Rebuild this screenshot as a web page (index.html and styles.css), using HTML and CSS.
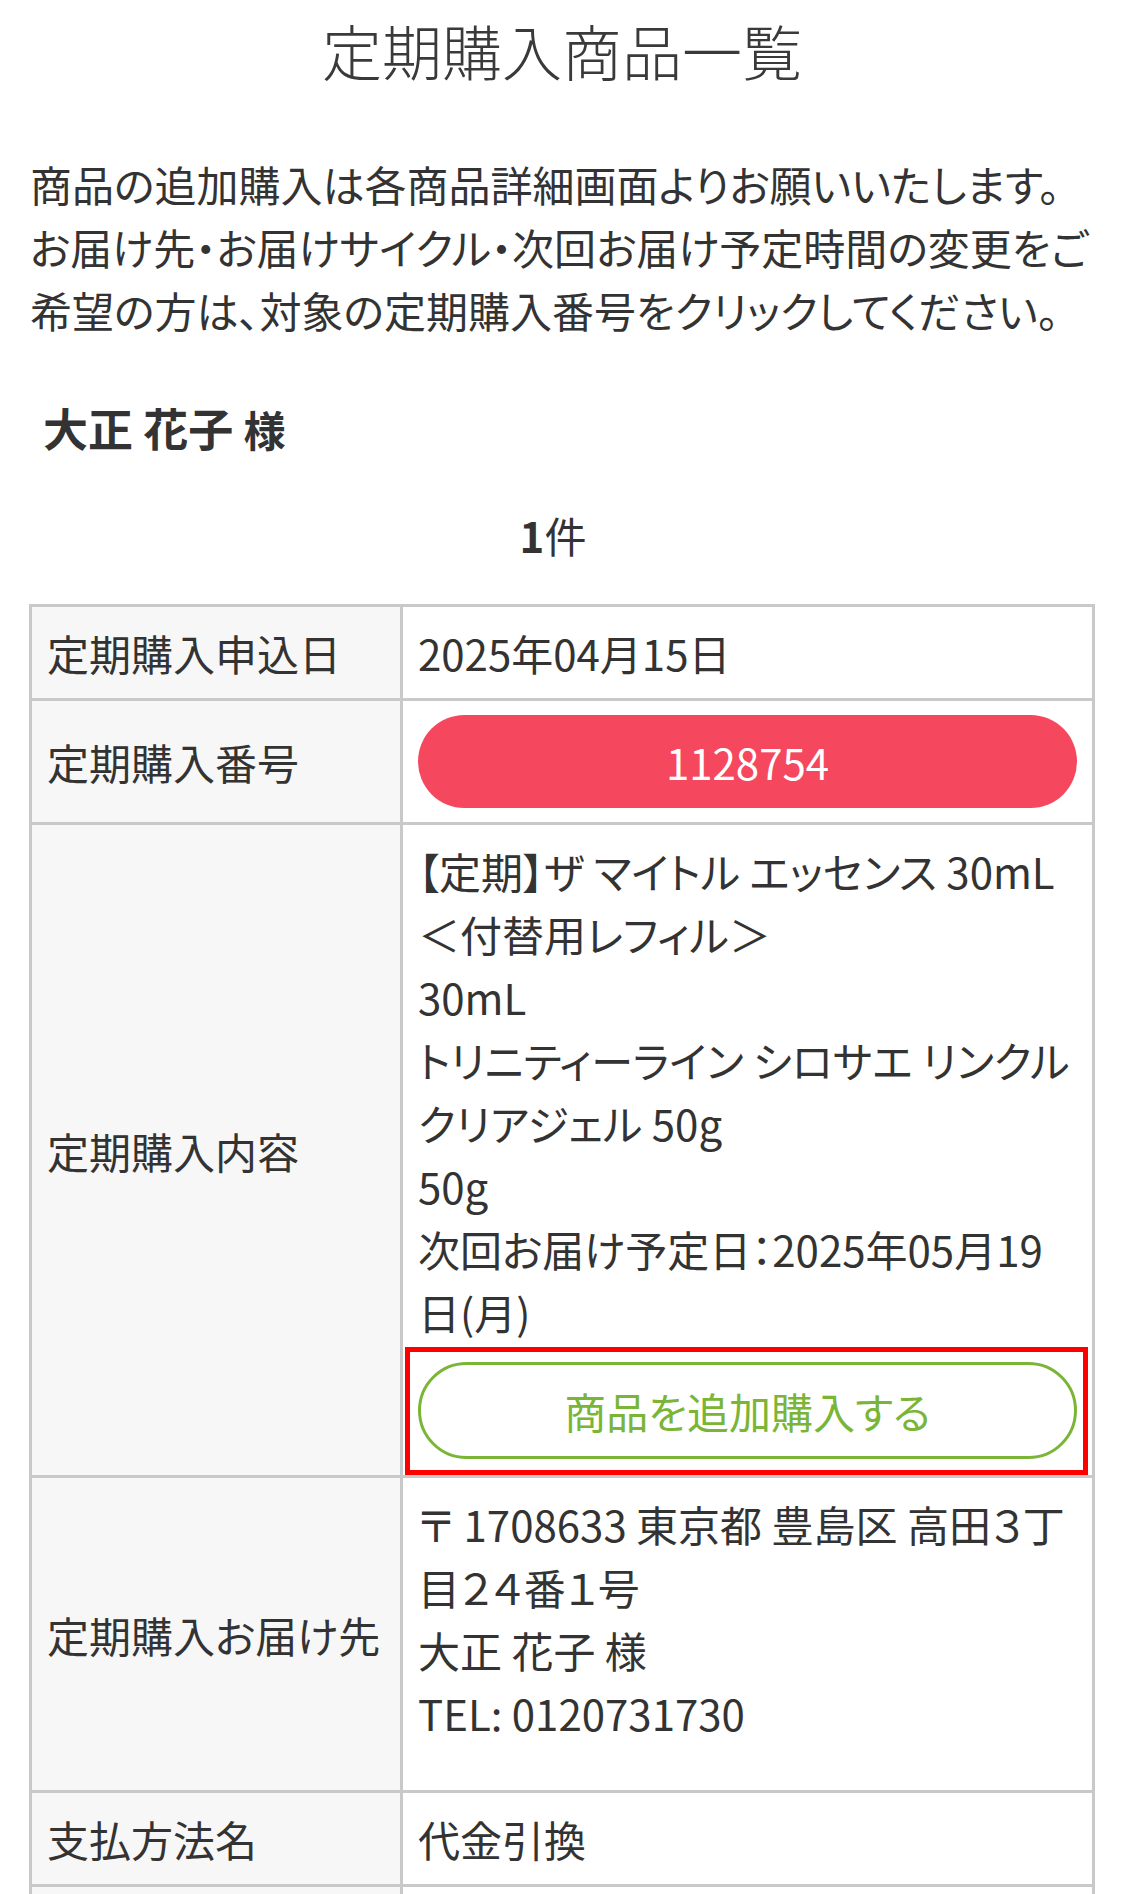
FILE: index.html
```html
<!DOCTYPE html>
<html lang="ja">
<head>
  <meta charset="UTF-8" />
  <meta name="viewport" content="width=device-width, initial-scale=1.0"/>
  <title>定期購入商品一覧</title>
  <link rel="stylesheet" href="styles.css">
</head>
<body>

<div class="page">
  <h1>定期購入商品一覧</h1>

  <p class="lead">
    商品の追加購入は各商品詳細画面よりお願いいたします。<br>
    お届け先・お届けサイクル・次回お届け予定時間の変更をご<br>
    希望の方は、対象の定期購入番号をクリックしてください。
  </p>

  <div class="customer">大正 花子 <span class="sama">様</span></div>

  <div class="count"><b>1</b>件</div>

  <table class="regular-table">
    <tr>
      <th>定期購入申込日</th>
      <td>2025年04月15日</td>
    </tr>
    <tr>
      <th>定期購入番号</th>
      <td><a class="btn-number" href="#">1128754</a></td>
    </tr>
    <tr>
      <th>定期購入内容</th>
      <td>
        【定期】ザ マイトル エッセンス 30mL<br>＜付替用レフィル＞<br>
        30mL<br>
        トリニティーライン シロサエ リンクル<br>クリアジェル 50g<br>
        50g<br>
        次回お届け予定日：2025年05月19<br>日(月)
        <div class="btn-wrap">
          <a class="btn-add" href="#">商品を追加購入する</a>
          <span class="highlight"></span>
        </div>
      </td>
    </tr>
    <tr>
      <th>定期購入お届け先</th>
      <td>
        <div class="address">
          〒 1708633 東京都 豊島区 高田３丁<br>目２４番１号<br>
          大正 花子 様<br>
          TEL: 0120731730
        </div>
      </td>
    </tr>
    <tr>
      <th>支払方法名</th>
      <td>代金引換</td>
    </tr>
    <tr>
      <th>&nbsp;</th>
      <td>&nbsp;</td>
    </tr>
  </table>
</div>

</body>
</html>
```

FILE: styles.css
```css
body {
  margin: 0;
  background: #fff;
  color: #333;
  font-family: "Noto Sans CJK JP", "Noto Sans", sans-serif;
  font-size: 42px;
  line-height: 63px;
  font-feature-settings: "palt";
}
.page {
  padding: 0 30px 0 29px;
}
h1 {
  margin: 0;
  height: 100px;
  line-height: 100px;
  font-size: 60px;
  font-weight: 300;
  text-align: center;
  color: #3a3a3a;
}
.lead {
  margin: 52px 0 0 1px;
  white-space: nowrap;
}
.customer {
  margin-top: 55px;
  padding-left: 14px;
  font-size: 45px;
  font-weight: bold;
}
.customer .sama {
  font-size: 42px;
}
.count {
  margin-top: 43px;
  padding-right: 18px;
  text-align: center;
}
.regular-table {
  width: 100%;
  margin-top: 38px;
  table-layout: fixed;
  border-spacing: 0;
  border-top: 3px solid #c9c9c9;
  border-left: 3px solid #c9c9c9;
}
.regular-table th,
.regular-table td {
  padding: 14px 15px;
  border-right: 3px solid #c9c9c9;
  border-bottom: 3px solid #c9c9c9;
  vertical-align: middle;
  text-align: left;
  white-space: nowrap;
}
.regular-table th {
  width: 338px;
  background: #f7f7f7;
  font-weight: normal;
}
.regular-table td {
  background: #fff;
}
.btn-number {
  display: block;
  padding: 15px 0;
  background: #f5475e;
  color: #fff;
  text-align: center;
  text-decoration: none;
  border-radius: 999px;
}
.btn-wrap {
  position: relative;
  margin: 19px 0 2px;
}
.btn-add {
  display: block;
  padding: 14px 0;
  border: 3px solid #7ab536;
  border-radius: 999px;
  color: #7ab536;
  text-align: center;
  text-decoration: none;
}
.highlight {
  position: absolute;
  top: -15px;
  right: -11px;
  bottom: -16px;
  left: -13px;
  border: 5px solid #f00;
  pointer-events: none;
}
.address {
  padding-bottom: 32px;
}
```
